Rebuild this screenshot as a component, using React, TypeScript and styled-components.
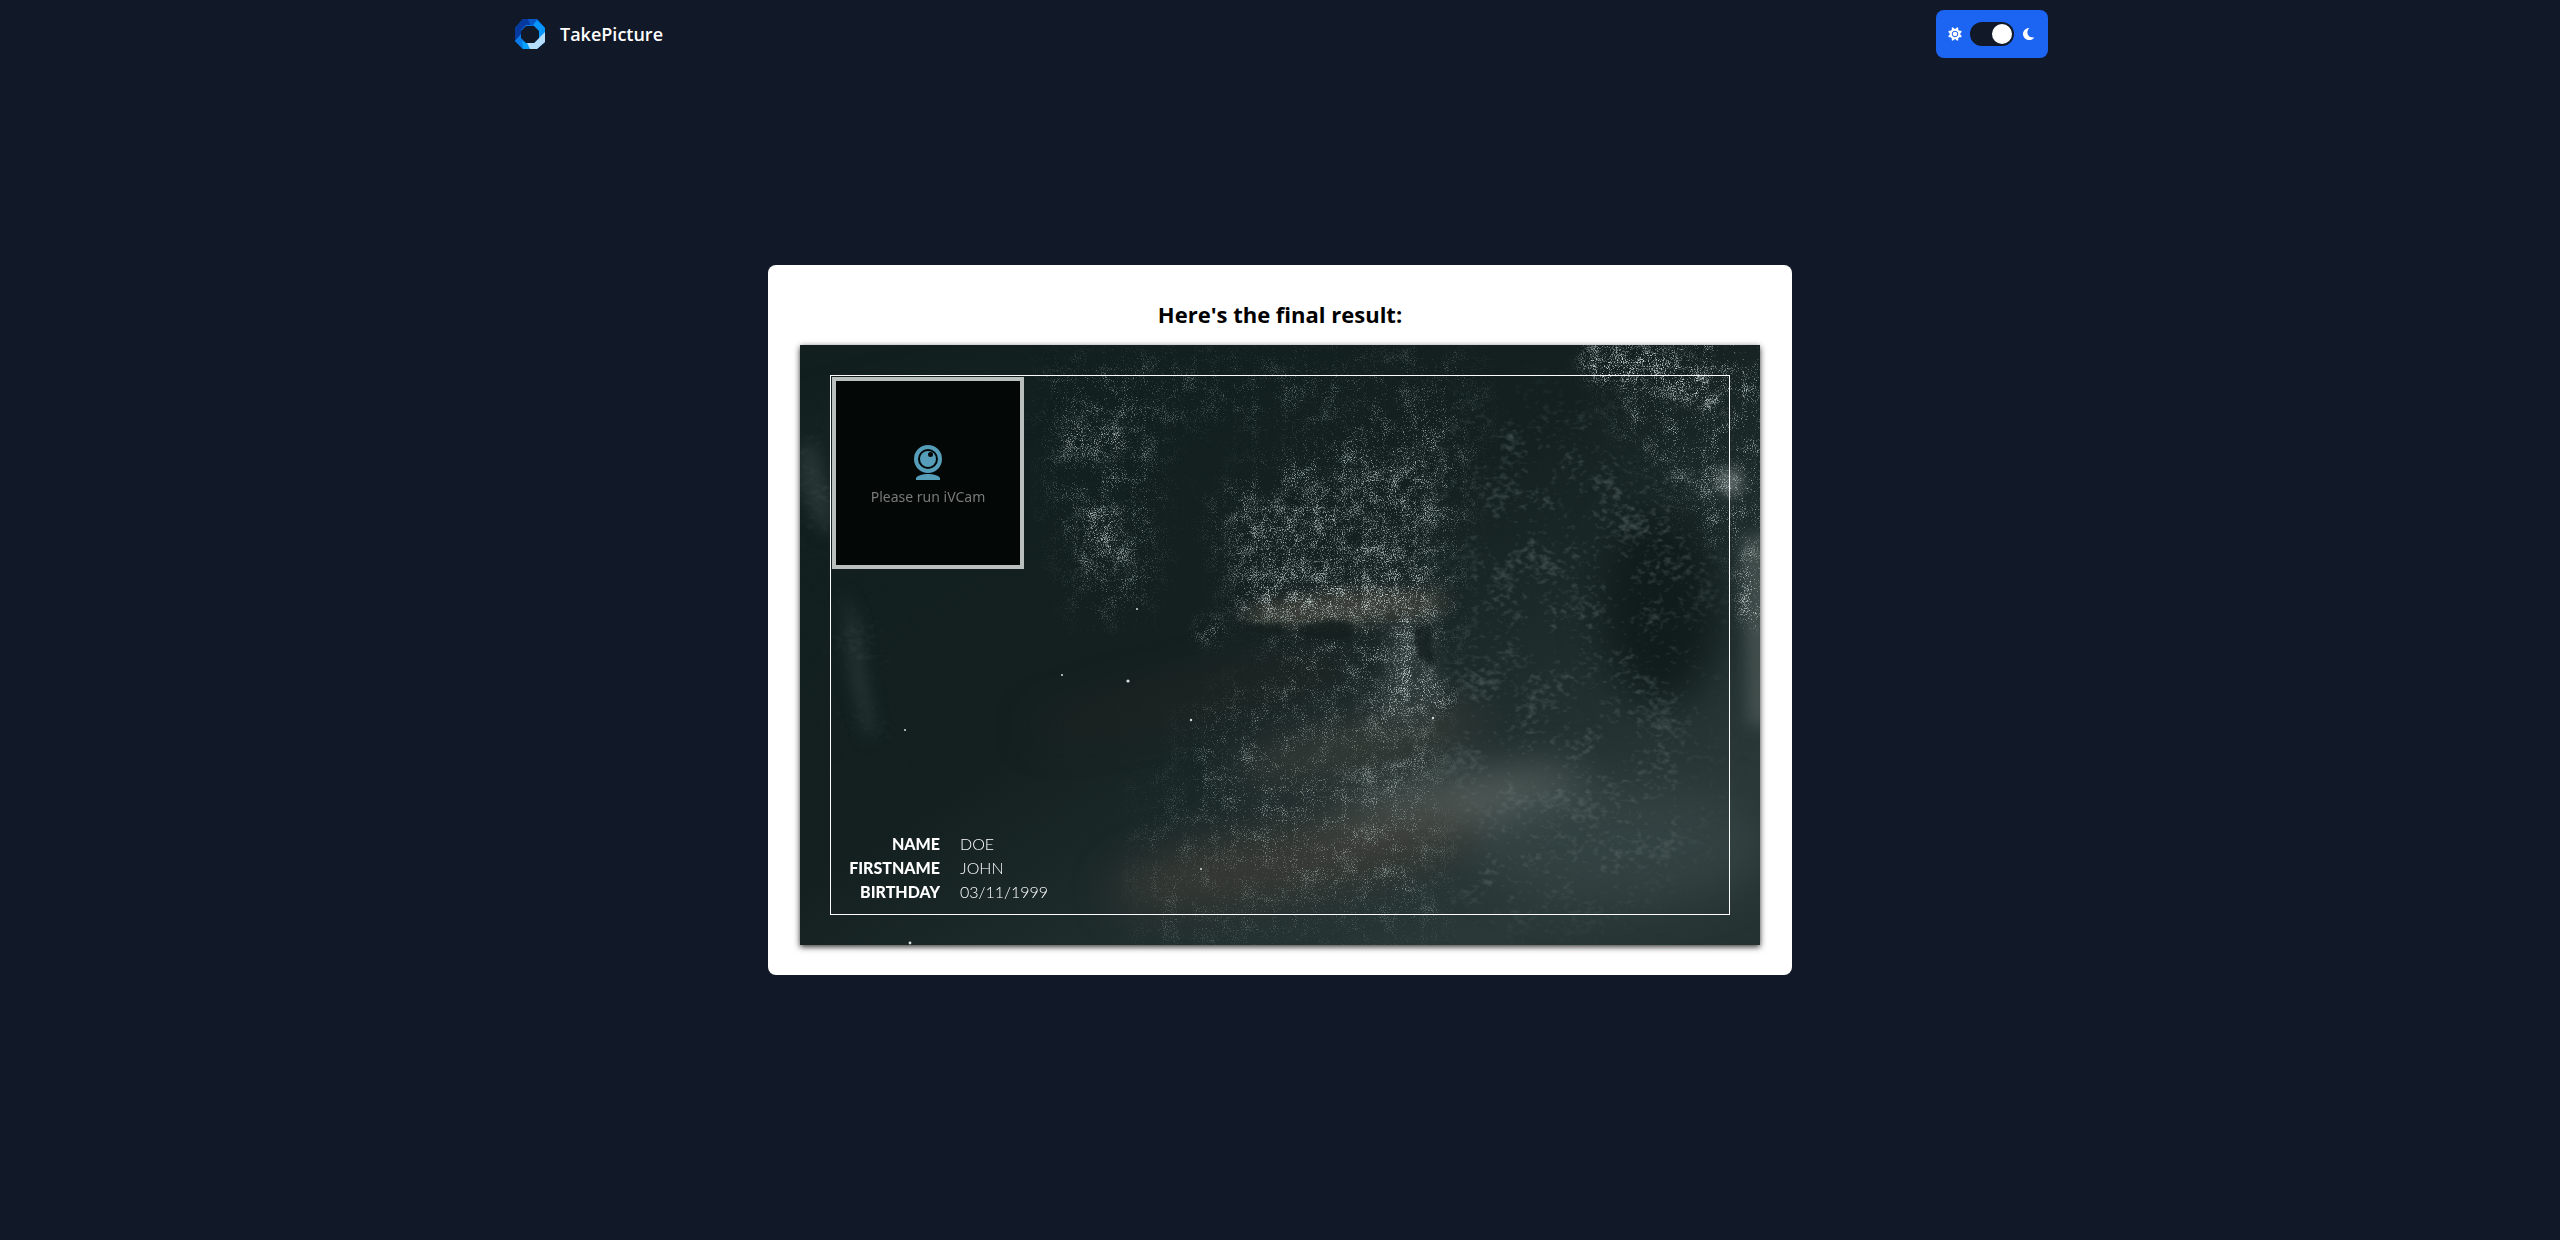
import React, { useState } from "react";
import styled, { createGlobalStyle } from "styled-components";

const GlobalStyle = createGlobalStyle`
  *, *::before, *::after { box-sizing: border-box; }
  body {
    margin: 0;
    background: #111827;
    color: #ffffff;
    font-family: "Open Sans", "Noto Sans", sans-serif;
  }
  h1, dl, dt, dd, figure { margin: 0; }
`;

const Page = styled.div`
  display: flex;
  flex-direction: column;
  min-height: 100vh;
  padding-bottom: 68px;
`;

const Header = styled.header`
  display: flex;
  align-items: center;
  justify-content: space-between;
  width: 100%;
  max-width: 1536px;
  margin: 0 auto;
  padding: 10px 0;
`;

const Brand = styled.a`
  display: flex;
  align-items: center;
  gap: 12px;
  color: #ffffff;
  font-size: 18px;
  font-weight: 600;
  line-height: 28px;
  text-decoration: none;
`;

const ThemeSwitch = styled.label`
  display: flex;
  align-items: center;
  gap: 8px;
  height: 48px;
  padding: 0 12px;
  border-radius: 8px;
  background: #1c64f2;
  cursor: pointer;
`;

const Toggle = styled.input`
  appearance: none;
  display: flex;
  align-items: center;
  width: 44px;
  height: 24px;
  margin: 0;
  padding: 2px;
  border-radius: 12px;
  background: #111827;
  cursor: pointer;

  &::before {
    content: "";
    width: 20px;
    height: 20px;
    border-radius: 50%;
    background: #ffffff;
  }
  &:checked { justify-content: flex-end; }
`;

const Main = styled.main`
  display: flex;
  flex: 1;
  align-items: center;
  justify-content: center;
`;

const Card = styled.section`
  width: 100%;
  max-width: 1024px;
  padding: 32px 32px 30px;
  border-radius: 8px;
  background: #ffffff;
`;

const Title = styled.h1`
  padding-bottom: 14px;
  color: #000000;
  font-size: 22px;
  font-weight: 700;
  line-height: 34px;
  text-align: center;
`;

const Badge = styled.figure`
  display: grid;
  aspect-ratio: 8 / 5;
  background: #111f1e;
  box-shadow: 0 2px 6px rgba(0, 0, 0, 0.8);
  font-family: Lato, sans-serif;

  & > * { grid-area: 1 / 1; }
`;

const Backdrop = styled.svg`
  display: block;
  width: 100%;
  height: 100%;
`;

const Frame = styled.div`
  z-index: 1;
  display: flex;
  flex-direction: column;
  align-items: flex-start;
  justify-content: space-between;
  margin: 30px;
  padding: 1px 1px 10px;
  border: 1px solid #ffffff;
`;

const Photo = styled.div`
  display: flex;
  flex-direction: column;
  align-items: center;
  gap: 6px;
  width: 192px;
  height: 192px;
  padding-top: 64px;
  border: 4px solid #b8bfbd;
  background: #030706;
  color: #777a79;
  font-family: "Noto Sans", sans-serif;
  font-size: 14px;
  line-height: 20px;
`;

const Details = styled.dl`
  display: grid;
  grid-template-columns: 108px auto;
  column-gap: 20px;
  color: #ffffff;
  font-size: 16px;
  line-height: 24px;
`;

const Term = styled.dt`
  font-weight: 900;
  text-align: right;
`;

const Value = styled.dd`
  font-weight: 300;
`;

function Logo() {
  return (
    <svg width="36" height="36" viewBox="0 0 36 36" aria-hidden="true">
      <path d="M11 3h14l8 9v14l-8 7H11l-8-8V12z" fill="#0a7cf0" />
      <path d="M3 12l8-9h5l6 6h-8l-5 5v5l-6 6z" fill="#0539a0" />
      <path d="M16 3h9l5 6-8 1-4-1z" fill="#0759c8" />
      <path d="M25 4l8 8v5l-7 7V14l-5-5z" fill="#0795ff" />
      <path d="M33 16v10l-8 7h-9l-1-6h7l5-5z" fill="#b5defc" />
      <path d="M3 25l6-7v5l8 10h-6z" fill="#087be8" />
      <path d="M10 25l5 2 3 6h-7z" fill="#08a0ff" />
      <path d="M14 10h8l5 5v7l-5 5h-8l-5-5v-7z" fill="#111827" />
    </svg>
  );
}

const teeth = [0, 45, 90, 135, 180, 225, 270, 315];

function Sun() {
  return (
    <svg width="14" height="14" viewBox="0 0 14 14" aria-hidden="true">
      <circle cx="7" cy="7" r="5.300" fill="#ffffff" />
      {teeth.map((angle) => (
        <path key={angle} d="M5.200 3L6.400 0h1.200l1.200 3z" fill="#ffffff" transform={`rotate(${angle + 22.5} 7 7)`} />
      ))}
      <circle cx="7" cy="7" r="2.800" fill="#ffffff" stroke="#1c64f2" strokeWidth="1" />
    </svg>
  );
}

function Moon() {
  return (
    <svg width="14" height="14" viewBox="0 0 14 14" aria-hidden="true">
      <path d="M7.500 1C3.800 1 1 3.700 1 7s2.800 6 6.200 6c2.200 0 4-1 5-2.600C8.500 11 5.400 9 5.400 5.600 5.400 3.700 6.200 2 7.500 1z" fill="#ffffff" />
    </svg>
  );
}

function Webcam() {
  return (
    <svg width="28" height="36" viewBox="0 0 28 36" aria-hidden="true">
      <circle cx="14" cy="14" r="12" fill="none" stroke="#559db9" strokeWidth="4" />
      <circle cx="14" cy="14" r="8" fill="#559db9" />
      <circle cx="16.500" cy="9.500" r="2.500" fill="#030706" />
      <path d="M2 35v-2c2-3 7-4 12-4s10 1 12 4v2z" fill="#559db9" />
    </svg>
  );
}

type DustProps = {
  id: string;
  freq: string;
  patch: string;
  seed: number;
  color: string;
  spread: number;
  fine: number;
  coarse: number;
  cut: number;
  gain: number;
};

/* Chalk dust: blurred shapes set the density of a thresholded noise. */
function Dust({ id, freq, patch, seed, color, spread, fine, coarse, cut, gain }: DustProps) {
  return (
    <filter id={id} x="0" y="0" width="960" height="600" filterUnits="userSpaceOnUse" colorInterpolationFilters="sRGB">
      <feGaussianBlur in="SourceGraphic" stdDeviation={spread} result="area" />
      <feTurbulence type="fractalNoise" baseFrequency={freq} numOctaves={2} seed={seed} result="fine" />
      <feTurbulence type="fractalNoise" baseFrequency={patch} numOctaves={4} seed={seed + 7} result="coarse" />
      <feColorMatrix in="fine" type="matrix" values="0 0 0 0 0  0 0 0 0 0  0 0 0 0 0  1 0 0 0 0" result="fineA" />
      <feColorMatrix in="coarse" type="matrix" values="0 0 0 0 0  0 0 0 0 0  0 0 0 0 0  0 1 0 0 0" result="coarseA" />
      <feComposite in="fineA" in2="coarseA" operator="arithmetic" k2={fine} k3={coarse} k4={cut} result="mix" />
      <feComposite in="mix" in2="area" operator="arithmetic" k1={gain} result="dust" />
      <feFlood floodColor={color} />
      <feComposite in2="dust" operator="in" />
    </filter>
  );
}

function Chalkboard() {
  return (
    <Backdrop viewBox="0 0 960 600" preserveAspectRatio="none" aria-hidden="true">
      <defs>
        <linearGradient id="board" x1="0" y1="0" x2="1" y2="1">
          <stop offset="0" stopColor="#111f1e" />
          <stop offset="0.450" stopColor="#142020" />
          <stop offset="0.850" stopColor="#2a3938" />
          <stop offset="1" stopColor="#243332" />
        </linearGradient>
        <filter id="haze" x="-100" y="-100" width="1160" height="800" filterUnits="userSpaceOnUse" colorInterpolationFilters="sRGB">
          <feGaussianBlur stdDeviation="20" />
        </filter>
        <filter id="soft" x="-100" y="-100" width="1160" height="800" filterUnits="userSpaceOnUse" colorInterpolationFilters="sRGB">
          <feGaussianBlur stdDeviation="8" />
        </filter>
        <filter id="edge" x="400" y="240" width="300" height="120" filterUnits="userSpaceOnUse" colorInterpolationFilters="sRGB">
          <feGaussianBlur stdDeviation="2" />
        </filter>
        <Dust id="chalk" freq="0.900" patch="0.050" seed={4} color="#a9b8b5" spread={18} fine={3.4} coarse={1.7} cut={-2.85} gain={1} />
        <Dust id="bright" freq="0.850" patch="0.080" seed={12} color="#bcc8c5" spread={8} fine={3.4} coarse={1.7} cut={-2.7} gain={1.4} />
        <Dust id="smear" freq="0.140 0.200" patch="0.025" seed={21} color="#6a7a78" spread={26} fine={1.5} coarse={1.2} cut={-1.4} gain={0.8} />
      </defs>
      <rect width="960" height="600" fill="url(#board)" />
      <g filter="url(#haze)">
        <ellipse cx="640" cy="468" rx="150" ry="32" fill="#626a67" opacity="0.800" transform="rotate(-12 640 468)" />
        <ellipse cx="500" cy="515" rx="190" ry="36" fill="#393a35" opacity="0.900" transform="rotate(-10 500 515)" />
        <ellipse cx="560" cy="400" rx="130" ry="20" fill="#3c403b" opacity="0.900" transform="rotate(-12 560 400)" />
        <ellipse cx="400" cy="350" rx="170" ry="14" fill="#232622" opacity="0.800" transform="rotate(-12 400 350)" />
        <ellipse cx="820" cy="500" rx="150" ry="60" fill="#344443" opacity="0.800" />
        <ellipse cx="860" cy="260" rx="60" ry="100" fill="#101c1b" />
        <ellipse cx="90" cy="70" rx="140" ry="16" fill="#192725" opacity="0.800" transform="rotate(-12 90 70)" />
      </g>
      <g filter="url(#soft)">
        <ellipse cx="545" cy="263" rx="105" ry="16" fill="#4a4840" opacity="0.700" transform="rotate(-4 545 263)" />
        <path d="M590 280l40-8 10 70-20 50-40-20z" fill="#36413f" opacity="0.600" />
        <path d="M942 190h30v190h-24z" fill="#56635f" opacity="0.600" />
        <ellipse cx="930" cy="137" rx="9" ry="11" fill="#a0aba8" opacity="0.800" />
        <path d="M0 100h16l14 50 2 40-14-10-18-40zM44 245l12 30 18 110-6 10-16-60z" fill="#30403e" opacity="0.700" />
      </g>
      <g filter="url(#smear)" fill="#ffffff">
        <path d="M650 60h160l90 140v300l-90 70H640z" opacity="0.800" />
        <path d="M0 100h18l22 80-10 20-30-80zM42 240l22 40 18 130-16-30z" />
        <path d="M800 130l60-20 70 120-20 20z" />
      </g>
      <g filter="url(#chalk)" fill="#ffffff">
        <path d="M250 20h90l20 90-10 150-70 10-30-150z" opacity="0.800" />
        <path d="M410 160l70-50 190-50-20 240-70 30-90-30-50-30z" />
        <path d="M340 10h340v70H350z" opacity="0.500" />
        <path d="M500 270h140v280H500l-60-30-60-140 100-60z" opacity="0.650" />
        <path d="M340 430h300v170H340z" opacity="0.400" />
        <path d="M780-20h200v230h-60l-90-120z" />
      </g>
      <g filter="url(#bright)" fill="#ffffff">
        <path d="M790 0h55l60 20 20 50-30-5-40-28-60 4-16-20z" opacity="0.900" />
        <path d="M870 120l50 30-24-2zM922 125h16v28h-16zM938 220l22-30v90h-18z" />
        <path d="M255 80l50-5 30 15-20 24-50-4z" opacity="0.700" />
        <path d="M280 150l40 10 10 60-20 10-18-20-12 40z" opacity="0.650" />
        <path d="M430 170l100-40 110-30-10 170-110 10-60-20-30-30z" opacity="0.550" />
        <path d="M398 280l20-10 6 26-24 2zM592 270l50 4-12 10-14 30 40 34-10 22-56-28z" opacity="0.800" />
        <path d="M420 250l200-20 10 30-180 20z" opacity="0.600" />
        <path d="M520 420l40 8 20 16-30-4zM555 440l70-40 20 12-50 44zM560 340h70v50h-60z" opacity="0.600" />
      </g>
      <path
        d="M614 282q14-7 20 2l-4 16 6 16-4 6q-22-10-18-40zM500 282q30-12 54-2l-4 12q-30 6-50-2zM440 282q30-8 46 2l-4 6q-24 2-42-8z"
        fill="#131e1d"
        opacity="0.800"
        filter="url(#edge)"
      />
      <g fill="#d5deda">
        <circle cx="328" cy="336" r="1.600" />
        <circle cx="391" cy="375" r="1.200" />
        <circle cx="262" cy="330" r="1" />
        <circle cx="105" cy="385" r="1" />
        <circle cx="110" cy="598" r="1.400" />
        <circle cx="337" cy="264" r="1" />
        <circle cx="633" cy="373" r="1.200" />
        <circle cx="401" cy="524" r="1" />
      </g>
    </Backdrop>
  );
}

const details = [
  { term: "NAME", value: "DOE" },
  { term: "FIRSTNAME", value: "JOHN" },
  { term: "BIRTHDAY", value: "03/11/1999" },
];

export default function App() {
  const [dark, setDark] = useState(true);
  return (
    <>
      <GlobalStyle />
      <Page>
        <Header>
          <Brand href="#">
            <Logo />
            TakePicture
          </Brand>
          <ThemeSwitch htmlFor="theme">
            <Sun />
            <Toggle
              id="theme"
              type="checkbox"
              role="switch"
              aria-label="Dark mode"
              checked={dark}
              onChange={(event) => setDark(event.target.checked)}
            />
            <Moon />
          </ThemeSwitch>
        </Header>
        <Main>
          <Card>
            <Title>Here's the final result:</Title>
            <Badge>
              <Chalkboard />
              <Frame>
                <Photo>
                  <Webcam />
                  Please run iVCam
                </Photo>
                <Details>
                  {details.map(({ term, value }) => (
                    <React.Fragment key={term}>
                      <Term>{term}</Term>
                      <Value>{value}</Value>
                    </React.Fragment>
                  ))}
                </Details>
              </Frame>
            </Badge>
          </Card>
        </Main>
      </Page>
    </>
  );
}
